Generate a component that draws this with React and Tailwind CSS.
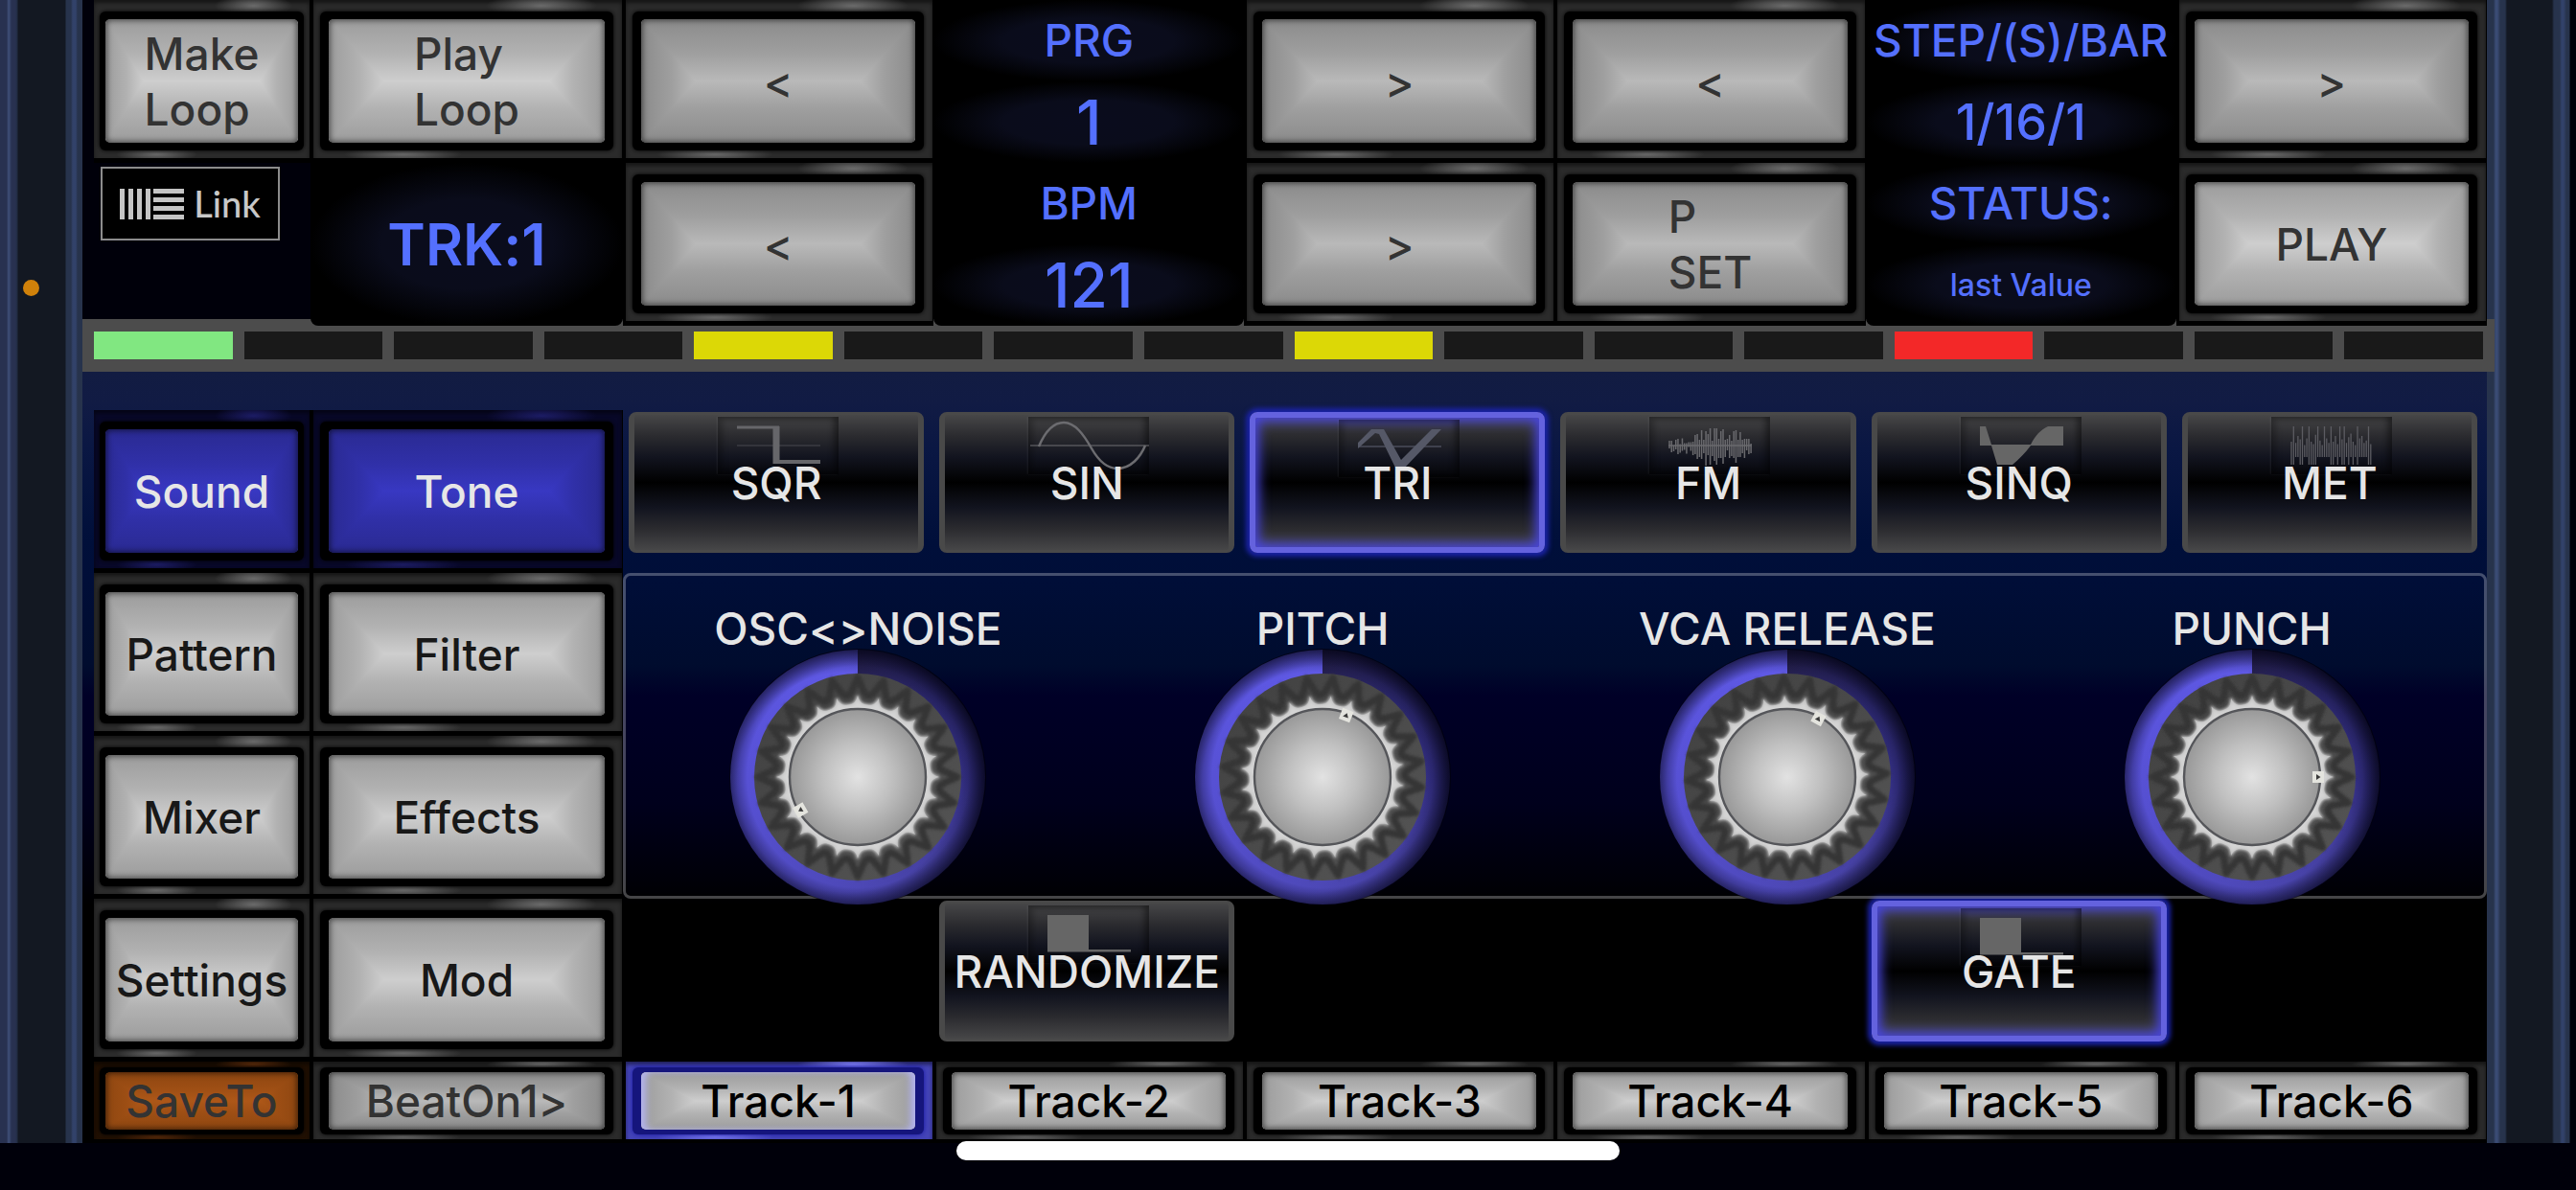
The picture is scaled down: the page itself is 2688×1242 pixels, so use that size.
import React, { useState } from 'react';
import clsx from 'clsx';

const DISPLAY_GLOW = 'bg-[radial-gradient(ellipse_50%_50%_at_center,#0a0c1d_0%,#0a0c1b_55%,#000_100%)]';

const padTones = {
  silver: {
    frame: 'bg-[#2b2b2b]',
    shine: 'bg-[radial-gradient(ellipse_50%_100%_at_center,#6a6a6a,transparent)]',
    face: 'bg-[linear-gradient(#9c9c9c,#b2b2b2_28%,#cecece_50%,#b2b2b2_72%,#9c9c9c)]',
    left: 'bg-[linear-gradient(to_right,#9c9c9c,#b2b2b2_56%,#cecece)]',
    right: 'bg-[linear-gradient(to_left,#9c9c9c,#b2b2b2_56%,#cecece)]',
  },
  dim: {
    frame: 'bg-[#2b2b2b]',
    shine: 'bg-[radial-gradient(ellipse_50%_100%_at_center,#6a6a6a,transparent)]',
    face: 'bg-[linear-gradient(#8b8b8b,#9f9f9f_28%,#b9b9b9_50%,#9f9f9f_72%,#8b8b8b)]',
    left: 'bg-[linear-gradient(to_right,#8b8b8b,#9f9f9f_56%,#b9b9b9)]',
    right: 'bg-[linear-gradient(to_left,#8b8b8b,#9f9f9f_56%,#b9b9b9)]',
  },
  blue: {
    frame: 'bg-[#080828]',
    shine: 'bg-[radial-gradient(ellipse_50%_100%_at_center,#1c1c64,transparent)]',
    face: 'bg-[linear-gradient(#2a2a92,#3030a8_28%,#3838c2_50%,#3030a8_72%,#2a2a92)]',
    left: 'bg-[linear-gradient(to_right,#2a2a92,#3030a8_56%,#3838c2)]',
    right: 'bg-[linear-gradient(to_left,#2a2a92,#3030a8_56%,#3838c2)]',
  },
  orange: {
    frame: 'bg-[#211003]',
    shine: 'bg-[radial-gradient(ellipse_50%_100%_at_center,#57290a,transparent)]',
    face: 'bg-[linear-gradient(#8f4711,#9d4e14_28%,#ad5718_50%,#9d4e14_72%,#8f4711)]',
    left: 'bg-[linear-gradient(to_right,#8f4711,#9d4e14_56%,#ad5718)]',
    right: 'bg-[linear-gradient(to_left,#8f4711,#9d4e14_56%,#ad5718)]',
  },
  lit: {
    frame: 'bg-[#4545b8]',
    shine: 'bg-[radial-gradient(ellipse_50%_100%_at_center,#7d7df0,transparent)]',
    face: 'bg-[linear-gradient(#9c9c9c,#b2b2b2_28%,#cecece_50%,#b2b2b2_72%,#9c9c9c)]',
    left: 'bg-[linear-gradient(to_right,#9c9c9c,#b2b2b2_56%,#cecece)]',
    right: 'bg-[linear-gradient(to_left,#9c9c9c,#b2b2b2_56%,#cecece)]',
  },
};

// Hardware style pad: metal frame, black groove, bevelled face
const Pad = ({ children, tone = 'silver', text = 'text-[#333]', narrow, short, onClick }) => {
  const t = padTones[tone];
  return (
    <button
      type="button"
      onClick={onClick}
      className={clsx('block h-full w-full bg-black', narrow ? 'pr-px' : 'pl-[3px] pr-px', short ? 'pb-1' : 'pb-[5px]')}
    >
      <span
        className={clsx(
          'relative block h-full shadow-[inset_0_3px_4px_#0008]',
          t.frame,
          short ? 'pt-[6px] pb-[5px]' : 'pt-3 pb-2',
          narrow ? 'px-[6px]' : 'pl-[7px] pr-[9px]'
        )}
      >
        <span className={clsx('absolute top-0 right-[8%] w-[36%]', t.shine, short ? 'h-[6px]' : 'h-3')} />
        <span className={clsx('absolute bottom-0 left-[10%] w-[38%]', t.shine, short ? 'h-[5px]' : 'h-2')} />
        <span
          className={clsx(
            'relative block h-full rounded-md',
            tone === 'lit' ? 'bg-[#15157c] shadow-[0_0_5px_#1515a0]' : 'bg-black shadow-[0_0_4px_#000]',
            short ? 'py-[5px]' : 'py-2',
            narrow ? 'px-[6px]' : 'px-[9px]'
          )}
        >
          <span className={clsx('relative flex h-full items-center justify-center overflow-hidden rounded-[5px]', t.face)}>
            <span className={clsx('absolute inset-y-0 left-0 w-1/5 [clip-path:polygon(0_0,100%_50%,0_100%)]', t.left)} />
            <span className={clsx('absolute inset-y-0 right-0 w-1/5 [clip-path:polygon(100%_0,0_50%,100%_100%)]', t.right)} />
            <span
              className={clsx(
                'absolute inset-0 rounded-[5px]',
                tone === 'lit'
                  ? 'shadow-[inset_7px_0_7px_-2px_#b4b4f0,inset_-7px_0_7px_-2px_#b4b4f0]'
                  : 'shadow-[inset_0_0_6px_1px_#0009]'
              )}
            />
            <span className={clsx('relative whitespace-pre text-left leading-[58px]', text)}>{children}</span>
          </span>
        </span>
      </span>
    </button>
  );
};

const Readout = ({ children, size = 'text-[46px]', glow = true }) => (
  <div
    className={clsx(
      'flex h-[85px] items-center justify-center whitespace-nowrap text-[#5470ff]',
      size,
      glow ? DISPLAY_GLOW : 'bg-black'
    )}
  >
    {children}
  </div>
);

const fmBars = [8, 12, 6, 10, 16, 9, 13, 7, 11, 5, 9, 14, 20, 26, 18, 30, 14, 36, 22, 38, 16, 34, 38, 20, 28, 36, 18, 12, 24, 16, 28, 34, 18, 26, 14, 20, 12, 16, 10];
const metBars = [20, 44, 18, 30, 24, 36, 14, 26, 40, 20, 16, 32, 46, 22, 14, 42, 26, 18, 44, 20, 30, 16, 38, 24, 48, 18, 28, 34, 20, 14, 40, 26, 30, 18, 22, 44, 16];

const waves = {
  SQR: (
    <g stroke="#66666a" fill="none">
      <path d="M20 30H107" strokeOpacity=".6" />
      <path d="M20 11H64" strokeWidth="3" />
      <path d="M61 10V49" strokeWidth="7" />
      <path d="M58 47H107" strokeWidth="4" />
    </g>
  ),
  SIN: (
    <g stroke="#6c6c70" fill="none">
      <path d="M2 30H126" strokeOpacity=".7" strokeWidth="1.5" />
      <path d="M11 31C19 12 28 6 37 6C49 6 58 19 66 33C74 47 84 54 93 54C107 54 117 42 122 30" strokeWidth="2.5" />
    </g>
  ),
  TRI: (
    <g fill="#555867">
      <path d="M20 27H107V29H20Z" fillOpacity=".6" />
      <path d="M20 24L34 10H47L65 42L97 10H107L69 50H59L42 15L38 14L20 30Z" />
    </g>
  ),
  FM: (
    <g fill="none" stroke="#6a6a6e" strokeWidth="1.5">
      <path d="M20 30H107" />
      {fmBars.map((h, i) => (
        <path key={i} d={`M${21 + i * 2.24} ${30 - h / 2 + (i % 3) * 2 - 1}v${h}`} />
      ))}
    </g>
  ),
  SINQ: (
    <path
      fill="#666"
      d="M20 10H26L32 29H73C78 19 83 14 91 10H107V30H73C67 38 61 44 54 50H38L32 30H20Z"
    />
  ),
  MET: (
    <g fill="none" stroke="#5c5c62" strokeWidth="1.3">
      {metBars.map((h, i) => (
        <path key={i} d={`M${21 + i * 2.3} ${h > 34 ? 10 : 38 - h * 0.6}V${h % 4 ? 42 : 50}`} />
      ))}
    </g>
  ),
  STEP: <path fill="#666" d="M20 10H63V46H107V48.5H20Z" />,
};

// Glossy black tile with a small wave drawing behind its name
const Tile = ({ label, wave, active, onClick }) => (
  <button type="button" onClick={onClick} aria-pressed={active} className="block h-full w-full pt-0.5 pr-[10px] pb-[21px] pl-[6px]">
    <span
      className={clsx(
        'relative flex h-full items-center justify-center rounded-lg bg-origin-border bg-[linear-gradient(#4a4a4b_0%,#2b2b2f_17%,#12141f_32%,#000_50%,#12141f_68%,#2b2b2f_83%,#4a4a4b_100%)]',
        active
          ? 'border-[6px] border-[#6462de] shadow-[0_0_5px_4px_#1a22a4,inset_0_0_12px_4px_#4845dc]'
          : 'border-x-[6px] border-y-[3px] border-[#494949]'
      )}
    >
      <svg
        viewBox="0 0 126 60"
        className="absolute top-0.5 left-[87px] h-[60px] w-[126px] shadow-[inset_5px_3px_6px_#0004,inset_-5px_0_6px_#0006,-1px_0_2px_#fff1]"
      >
        {waves[wave]}
      </svg>
      <span className="relative whitespace-nowrap leading-[58px] text-[#e6e6e6]">{label}</span>
    </span>
  </button>
);

const TEETH = 24;
const polar = (r, deg) => {
  const a = (deg * Math.PI) / 180;
  return `${(133 + r * Math.sin(a)).toFixed(2)} ${(133 - r * Math.cos(a)).toFixed(2)}`;
};

const zigzag = () => {
  const step = 360 / TEETH;
  let d = `M${polar(104, 0)}`;
  for (let i = 0; i < TEETH; i++) {
    const a = i * step;
    d += `L${polar(92, a + 3.4)}Q${polar(80, a + step / 2)} ${polar(92, a + step - 3.4)}L${polar(104, a + step)}`;
  }
  return d + 'Z';
};

const crown = () => {
  const step = 360 / TEETH;
  let d = `M${polar(85, 0)}`;
  for (let i = 0; i < TEETH; i++) {
    const a = i * step;
    d += `C${polar(77, a + 1.5)} ${polar(76, a + 4)} ${polar(76, a + step / 2)}C${polar(76, a + step - 4)} ${polar(77, a + step - 1.5)} ${polar(85, a + step)}`;
  }
  return d + 'Z';
};

const Knob = ({ id, label, angle, value }) => (
  <div className="flex flex-col items-center">
    <label htmlFor={id} className="whitespace-nowrap leading-[44px] text-[#e6e6e6]">
      {label}
    </label>
    <div className="relative size-[266px] rounded-full bg-[conic-gradient(#25204f,#2e2a74_45deg,#37328c_90deg,#443f9f_135deg,#4d48b6_180deg,#554fcf_250deg,#5a54dc_300deg,#605ae6_360deg)]">
      <div className="absolute -inset-px rounded-full bg-[radial-gradient(circle_at_46%_52%,transparent_57%,#00000a55_66%,#00000acc_76%)]" />
      <div className="absolute -inset-px rounded-full bg-[radial-gradient(closest-side,transparent_86%,#00001077_100%)]" />
      <svg viewBox="0 0 266 266" className="absolute inset-0 h-full w-full">
        <defs>
          <radialGradient id={`${id}-cap`}>
            <stop offset="0" stopColor="#e2e2e2" />
            <stop offset=".5" stopColor="#c0c0c0" />
            <stop offset="1" stopColor="#989898" />
          </radialGradient>
          <linearGradient id={`${id}-rim`} x1="0" y1="0" x2="1" y2="1">
            <stop offset="0" stopColor="#404040" />
            <stop offset=".5" stopColor="#4a4a4a" />
            <stop offset="1" stopColor="#565656" />
          </linearGradient>
          <filter id={`${id}-soft`} x="-20%" y="-20%" width="140%" height="140%">
            <feGaussianBlur stdDeviation="1.5" />
          </filter>
        </defs>
        <circle cx="133" cy="133" r="108" fill={`url(#${id}-rim)`} />
        <g transform={`rotate(${angle} 133 133)`}>
          <path d={zigzag()} fill="none" stroke="#343434" strokeWidth="7" strokeLinejoin="round" filter={`url(#${id}-soft)`} />
          <path d={crown()} fill="#fff" stroke="#b0b0b0" strokeWidth="2.5" filter={`url(#${id}-soft)`} />
          <path d={crown()} fill="#c9c9c9" fillOpacity=".8" />
        </g>
        <circle cx="133" cy="133" r="71" fill={`url(#${id}-cap)`} stroke="#55565a" strokeWidth="2.4" />
        <g transform={`rotate(${angle} 133 133)`}>
          <rect x="127" y="58" width="12" height="12" fill="#e4e4de" />
          <path d="M130 66L133 61.500L136 66Z" fill="#3a3a3a" />
        </g>
      </svg>
      <input
        id={id}
        type="range"
        min="0"
        max="100"
        defaultValue={value}
        className="absolute inset-0 h-full w-full cursor-pointer opacity-0"
      />
    </div>
  </div>
);

const knobs = [
  { id: 'osc', label: 'OSC<>NOISE', angle: 240, value: 0 },
  { id: 'pitch', label: 'PITCH', angle: 21, value: 55 },
  { id: 'release', label: 'VCA RELEASE', angle: 28, value: 58 },
  { id: 'punch', label: 'PUNCH', angle: 90, value: 75 },
];

const steps = ['bg-[#81e781]', '', '', '', 'bg-[#dcd806]', '', '', '', 'bg-[#dcd806]', '', '', '', 'bg-[#f32828]', '', '', ''];

const menu = [
  ['Sound', 'Tone'],
  ['Pattern', 'Filter'],
  ['Mixer', 'Effects'],
  ['Settings', 'Mod'],
];

const GRID = 'grid grid-cols-[226px_326px_repeat(6,minmax(0,1fr))]';

const LinkBadge = () => (
  <button
    type="button"
    className="mt-1 ml-[7px] flex h-[77px] w-[187px] items-center justify-center gap-[10px] border-2 border-[#8c8c8c] bg-black font-[Lato,sans-serif] text-[38px] text-[#c8c8c8]"
  >
    <svg viewBox="0 0 67 32" className="h-8 w-[67px]" fill="#c4c4c4">
      <path d="M0 0h5v32H0zM9 0h5v32H9zM18 0h5v32h-5zM27 0h5v32h-5zM35 0h32v5H35zM35 9h32v5H35zM35 18h32v5H35zM35 27h32v5H35z" />
    </svg>
    Link
  </button>
);

const MenuPads = ({ row, selected, onSelect }) =>
  menu[row].map((name, col) => {
    const on = selected[col] === row;
    return (
      <Pad
        key={name}
        narrow={col === 0}
        tone={on ? 'blue' : 'silver'}
        text={on ? 'text-[#e6e6e6]' : 'text-[#181818]'}
        onClick={() => onSelect(col, row)}
      >
        {name}
      </Pad>
    );
  });

export default function App() {
  const [selected, setSelected] = useState([0, 0]);
  const [wave, setWave] = useState('TRI');
  const [gate, setGate] = useState(true);
  const [track, setTrack] = useState(1);

  const select = (col, row) => setSelected(selected.map((s, i) => (i === col ? row : s)));

  return (
    <div className="flex min-h-screen flex-col bg-[#00000a] font-[Inter,sans-serif] text-[46px] font-medium [font-feature-settings:'calt'_0]">
      <div className="flex">
        <aside className="w-[86px] shrink-0 bg-[linear-gradient(to_right,#283150_0_7px,#40507a_9px,#283150_12px_16px,#212c42_18px,#131822_19px_68px,#27334c_69px_74px,#32426a_76px_79px,#27334c_81px)]">
          <div className="mt-[292px] ml-6 size-[17px] rounded-full bg-[#d0810a]" />
        </aside>

        <main className="min-w-0 flex-1">
          <section className={clsx(GRID, 'relative z-10 auto-rows-[170px] pl-3')}>
            <Pad narrow>{'Make\nLoop'}</Pad>
            <Pad>{'Play\nLoop'}</Pad>
            <Pad tone="dim">&lt;</Pad>
            <div>
              <Readout>PRG</Readout>
              <Readout size="text-[64px]">1</Readout>
            </div>
            <Pad tone="dim">&gt;</Pad>
            <Pad tone="dim">&lt;</Pad>
            <div>
              <Readout>STEP/(S)/BAR</Readout>
              <Readout size="text-[52px]">1/16/1</Readout>
            </div>
            <Pad tone="dim">&gt;</Pad>

            <div>
              <LinkBadge />
            </div>
            <div className={clsx('flex items-center justify-center rounded-b-lg text-[60px] font-semibold text-[#5470ff]', DISPLAY_GLOW)}>
              TRK:1
            </div>
            <Pad tone="dim">&lt;</Pad>
            <div className="overflow-hidden rounded-b-lg">
              <Readout glow={false}>BPM</Readout>
              <Readout size="text-[64px]">121</Readout>
            </div>
            <Pad tone="dim">&gt;</Pad>
            <Pad tone="dim">{'P\nSET'}</Pad>
            <div className="overflow-hidden rounded-b-lg">
              <Readout>STATUS:</Readout>
              <Readout size="text-[32px]">last Value</Readout>
            </div>
            <Pad>PLAY</Pad>
          </section>

          <section className="relative -mt-[7px] -mr-2 grid h-[55px] grid-cols-16 gap-3 bg-[#4c4c4c] px-3 pt-[13px] pb-[13px]">
            {steps.map((color, i) => (
              <div key={i} className={color || 'bg-[#191919]'} />
            ))}
          </section>

          <section className="bg-[linear-gradient(#121c42_0%,#111b44_4%,#0a1743_10%,#000f3a_22%,#000e38_27%,#000c2e_38%,#000027_42%,#00001c_56%,#000008_66%,#000_69%)] pt-10 pl-3">
            <div className={clsx(GRID, 'auto-rows-[170px]')}>
              <MenuPads row={0} selected={selected} onSelect={select} />
              {['SQR', 'SIN', 'TRI', 'FM', 'SINQ', 'MET'].map((name) => (
                <Tile key={name} label={name} wave={name} active={wave === name} onClick={() => setWave(name)} />
              ))}

              <MenuPads row={1} selected={selected} onSelect={select} />
              <div className="z-10 col-span-6 row-span-2 grid grid-cols-4 rounded-lg border-[3px] border-white/27 pt-[33px]">
                {knobs.map((k) => (
                  <Knob key={k.id} {...k} />
                ))}
              </div>
              <MenuPads row={2} selected={selected} onSelect={select} />

              <MenuPads row={3} selected={selected} onSelect={select} />
              <div className="col-start-4">
                <Tile label="RANDOMIZE" wave="STEP" />
              </div>
              <div className="col-start-7">
                <Tile label="GATE" wave="STEP" active={gate} onClick={() => setGate(!gate)} />
              </div>
            </div>

            <div className={clsx(GRID, 'auto-rows-[85px]')}>
              <Pad narrow short tone="orange">SaveTo</Pad>
              <Pad short tone="dim">BeatOn1&gt;</Pad>
              {[1, 2, 3, 4, 5, 6].map((n) => (
                <Pad key={n} short tone={track === n ? 'lit' : 'silver'} text="text-black" onClick={() => setTrack(n)}>
                  {`Track-${n}`}
                </Pad>
              ))}
            </div>
          </section>
        </main>

        <aside className="w-[93px] shrink-0 bg-[linear-gradient(to_right,#27334c_0_7px,#3a4b74_9px_11px,#27334c_14px_19px,#131822_21px_68px,#27334c_70px_76px,#32426a_78px_80px,#27334c_83px_86px,#000008_87px)]" />
      </div>

      <footer className="relative z-10 flex flex-1 justify-center">
        <div className="-mt-0.5 h-5 w-[692px] rounded-full bg-white" />
      </footer>
    </div>
  );
}
